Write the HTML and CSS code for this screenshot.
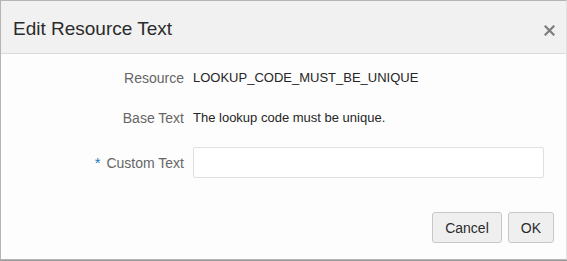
FILE: index.html
```html
<!DOCTYPE html>
<html lang="en">
<head>
    <meta charset="UTF-8">
    <title>Edit Resource Text</title>
    <link rel="stylesheet" href="styles.css">
</head>
<body>
    <div class="dialog">
        <div class="dialog-header">
            <h1>Edit Resource Text</h1>
            <button class="close-button" title="Close">
                <svg width="11" height="11" viewBox="0 0 11 11">
                    <path d="M1.5 1.5 L9.5 9.5 M9.5 1.5 L1.5 9.5" stroke="#7d7d7d" stroke-width="2.2" stroke-linecap="square"/>
                </svg>
            </button>
        </div>

        <div class="form">
            <div class="label">Resource</div>
            <div class="value">LOOKUP_CODE_MUST_BE_UNIQUE</div>

            <div class="label">Base Text</div>
            <div class="value">The lookup code must be unique.</div>

            <div class="label"><span class="required">*</span> Custom Text</div>
            <div class="value"><input type="text" class="text-input"></div>
        </div>

        <div class="button-group">
            <button class="dialog-button">Cancel</button>
            <button class="dialog-button">OK</button>
        </div>
    </div>
</body>
</html>
```

FILE: styles.css
```css
body {
    margin: 0;
    background: #9a9a9a;
    font-family: 'Liberation Sans', Arial, Helvetica, sans-serif;
    color: #333333;
    height: 261px;
    overflow: hidden;
}

.dialog {
    background: #fdfdfd;
    border: 1px solid #b5b5b5;
    border-right-color: #e2e2e2;
    box-sizing: border-box;
    height: 260px;
}

.dialog-header {
    background: #f1f1f1;
    height: 52px;
    border-bottom: 1px solid #dcdcdc;
    display: flex;
    align-items: center;
    justify-content: space-between;
    padding: 0 11px 0 12px;
}

.dialog-header h1 {
    margin: 0;
    font-size: 19px;
    font-weight: normal;
    color: #2b2b2b;
    padding-top: 4px;
}

.close-button {
    background: none;
    border: none;
    padding: 0;
    width: 11px;
    height: 11px;
    margin-top: 6px;
    cursor: pointer;
}

.close-button svg {
    display: block;
}

.form {
    display: grid;
    grid-template-columns: 183px 1fr;
    column-gap: 9px;
    row-gap: 20px;
    align-items: center;
    padding: 14px 22px 0 0;
    font-size: 14px;
    line-height: 20px;
}

.label {
    text-align: right;
    color: #666666;
}

.value {
    color: #262626;
    font-size: 13px;
}

.required {
    color: #2a78b4;
    font-size: 15px;
    margin-right: 2px;
}

.text-input {
    display: block;
    width: 100%;
    box-sizing: border-box;
    height: 31px;
    border: 1px solid #e0e0e0;
    border-radius: 2px;
    background: #ffffff;
    font: inherit;
    margin-top: -1px;
}

.button-group {
    display: flex;
    justify-content: flex-end;
    gap: 6px;
    padding: 34px 12px 0 0;
}

.dialog-button {
    height: 31px;
    padding: 0 12px;
    background: #efefef;
    border: 1px solid #c8c8c8;
    border-radius: 3px;
    font-family: inherit;
    font-size: 14px;
    color: #2b2b2b;
    cursor: pointer;
}
```
